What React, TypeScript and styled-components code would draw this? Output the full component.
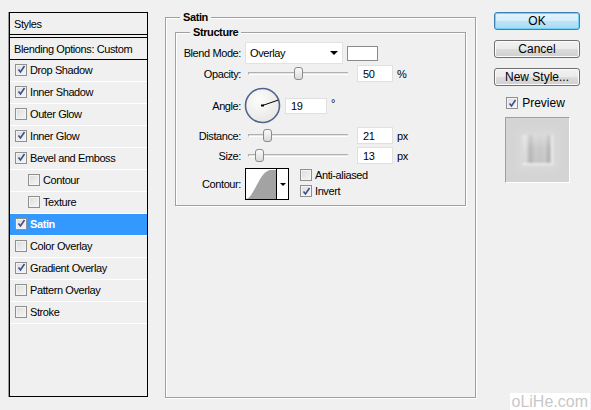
import React from 'react'
import styled, { createGlobalStyle } from 'styled-components'

const GlobalStyle = createGlobalStyle`
  html, body {
    margin: 0;
    padding: 0;
    background: #f0f0f0;
  }
  body {
    font-family: "Liberation Sans", Arial, sans-serif;
    font-size: 11px;
    letter-spacing: -0.4px;
    color: #000;
  }
`

const Window = styled.div`
  position: relative;
  width: 591px;
  height: 410px;
  overflow: hidden;
  display: flex;
  align-items: flex-start;
  padding: 12px 0 0 9px;
  box-sizing: border-box;
`

const StylesPanel = styled.div`
  width: 139px;
  height: 385px;
  box-sizing: border-box;
  border: 1px solid #000;
  box-shadow: -1px 0 0 #9a9a9a;
  display: flex;
  flex-direction: column;
`

const PanelHeader = styled.div`
  height: 21px;
  display: flex;
  align-items: center;
  padding-left: 4px;
  border-bottom: 1px solid #000;
`

const BlendingRow = styled.div`
  height: 21px;
  margin-top: 2px;
  display: flex;
  align-items: center;
  padding-left: 4px;
  border-top: 1px solid #000;
  border-bottom: 1px solid #000;
`

const StyleRow = styled.div<{ $indent?: boolean; $selected?: boolean }>`
  height: 22px;
  box-sizing: border-box;
  display: flex;
  align-items: center;
  gap: 3px;
  padding: 0 0 2px ${({ $indent }) => ($indent ? '18px' : '5px')};
  border-bottom: 1px solid #fff;
  background: ${({ $selected }) => ($selected ? '#3399ff' : 'transparent')};
  color: ${({ $selected }) => ($selected ? '#fff' : '#000')};
  font-weight: ${({ $selected }) => ($selected ? 'bold' : 'normal')};
`

const Box = styled.span`
  width: 12px;
  height: 12px;
  box-sizing: border-box;
  border: 1px solid #8e8f8f;
  background: linear-gradient(135deg, #dcdcdc, #f6f6f6);
  box-shadow: inset 0 0 0 1px #f4f4f4;
  display: inline-flex;
  align-items: center;
  justify-content: center;
  flex: none;
`

const Check = ({ on }: { on?: boolean }) => (
  <Box>
    {on && (
      <svg width="9" height="9" viewBox="0 0 9 9">
        <path d="M1.5 4.5 L3.5 7 L7.5 1" fill="none" stroke="#3d4f8a" strokeWidth="1.6" />
      </svg>
    )}
  </Box>
)

const Group = styled.div<{ $width: number; $height: number; $top: number; $left: number }>`
  position: relative;
  width: ${({ $width }) => $width}px;
  height: ${({ $height }) => $height}px;
  margin: ${({ $top, $left }) => `${$top}px 0 0 ${$left}px`};
  box-sizing: border-box;
  border: 1px solid #a0a0a0;
  box-shadow: 1px 1px 0 #fff, inset 1px 1px 0 #fff;
  flex: none;
`

const Legend = styled.span`
  position: absolute;
  top: -7px;
  left: 14px;
  padding: 0 3px;
  background: #f0f0f0;
  font-weight: bold;
  line-height: 13px;
`

const StructureBody = styled.div`
  display: flex;
  flex-direction: column;
  padding-top: 9px;
`

const Row = styled.div<{ $gap: number }>`
  display: flex;
  align-items: center;
  margin-top: ${({ $gap }) => $gap}px;
`

const Label = styled.span`
  width: 65px;
  text-align: right;
  flex: none;
`

const Select = styled.div`
  width: 98px;
  height: 22px;
  margin-left: 4px;
  box-sizing: border-box;
  background: #fff;
  border: 1px solid #e2e2e2;
  display: flex;
  align-items: center;
  justify-content: space-between;
  padding: 0 4px 0 4px;
`

const Arrow = styled.span`
  width: 0;
  height: 0;
  border-left: 4px solid transparent;
  border-right: 4px solid transparent;
  border-top: 4px solid #000;
`

const Swatch = styled.div`
  width: 31px;
  height: 15px;
  margin-left: 4px;
  box-sizing: border-box;
  background: #fff;
  border: 1px solid #8a8a8a;
`

const Track = styled.div<{ $left: number }>`
  position: relative;
  width: 100px;
  height: 3px;
  margin-left: ${({ $left }) => $left}px;
  box-sizing: border-box;
  background: #e4e4e4;
  border-top: 1px solid #b0b0b0;
  border-left: 1px solid #b0b0b0;
  border-bottom: 1px solid #fff;
`

const Thumb = styled.span`
  position: absolute;
  top: -6px;
  width: 9px;
  height: 13px;
  margin-left: -5px;
  box-sizing: border-box;
  border: 1px solid #8a8a8a;
  border-radius: 3px;
  background: linear-gradient(#fbfbfb, #dadada);
`

const Input = styled.div<{ $width: number; $left: number; $height?: number }>`
  width: ${({ $width }) => $width}px;
  height: ${({ $height = 17 }) => $height}px;
  margin-left: ${({ $left }) => $left}px;
  box-sizing: border-box;
  background: #fff;
  border: 1px solid #e0e0e0;
  display: flex;
  align-items: center;
  padding-left: 5px;
`

const Unit = styled.span<{ $raise?: boolean }>`
  margin-left: 4px;
  align-self: ${({ $raise }) => ($raise ? 'flex-start' : 'center')};
  margin-top: ${({ $raise }) => ($raise ? '10px' : '0')};
`

const Dial = styled.svg`
  margin-left: 3px;
  flex: none;
`

const ContourBox = styled.div`
  width: 44px;
  height: 32px;
  margin-left: 4px;
  box-sizing: border-box;
  border: 1px solid #000;
  display: flex;
  background: #fff;
`

const ContourDrop = styled.div`
  flex: 1;
  border-left: 1px solid #000;
  display: flex;
  align-items: center;
  justify-content: center;
  background: #fff;
`

const SmallArrow = styled.span`
  width: 0;
  height: 0;
  border-left: 3px solid transparent;
  border-right: 3px solid transparent;
  border-top: 3px solid #000;
`

const Options = styled.div`
  display: flex;
  flex-direction: column;
  gap: 4px;
  margin-left: 11px;
  align-self: flex-start;
  margin-top: 1px;
`

const Option = styled.label`
  display: flex;
  align-items: center;
  gap: 3px;
`

const Side = styled.div`
  width: 86px;
  margin-left: 18px;
  display: flex;
  flex-direction: column;
  align-items: center;
  flex: none;
  letter-spacing: 0;
`

const Button = styled.div<{ $primary?: boolean }>`
  width: 86px;
  height: 18px;
  box-sizing: border-box;
  border-radius: 3px;
  border: 1px solid ${({ $primary }) => ($primary ? '#3c7fb1' : '#707070')};
  background: ${({ $primary }) =>
    $primary
      ? 'linear-gradient(#e5f4fc 0%, #d4edfb 50%, #bde3f8 50%, #a9d9f4 100%)'
      : 'linear-gradient(#f2f2f2 0%, #ebebeb 50%, #dddddd 50%, #cfcfcf 100%)'};
  box-shadow: inset 0 0 0 1px ${({ $primary }) => ($primary ? '#6fd3f7' : '#fcfcfc')};
  display: flex;
  align-items: center;
  justify-content: center;
  font-size: 12px;
  margin-bottom: 10px;
`

const PreviewToggle = styled.label`
  display: flex;
  align-items: center;
  gap: 4px;
  font-size: 12px;
  margin: 0 3px 7px 0;
`

const PreviewBox = styled.div`
  width: 65px;
  height: 66px;
  box-sizing: border-box;
  border-top: 1px solid #a0a0a0;
  border-left: 1px solid #a0a0a0;
  border-bottom: 1px solid #fff;
  border-right: 1px solid #fff;
  background: #d4d4d4;
  display: flex;
  align-items: center;
  justify-content: center;
`

const PreviewSwatch = styled.div`
  width: 31px;
  height: 30px;
  background:
    linear-gradient(180deg, rgba(255, 255, 255, 0.3) 0%, rgba(255, 255, 255, 0) 45%, rgba(0, 0, 0, 0.03) 100%),
    linear-gradient(90deg, #d8d8d8 0%, #e2e2e2 12%, #b6b6b6 26%, #cdcdcd 42%, #c8c8c8 62%, #d0d0d0 74%, #b2b2b2 86%, #dadada 100%);
  box-shadow: 0 0 7px 5px #dadada, inset -2px -2px 0 #ececec;
  filter: blur(0.8px);
`

const Watermark = styled.span`
  position: absolute;
  right: 1px;
  bottom: 0;
  padding: 0 2px;
  background: #fff;
  color: #c8c8c8;
  font-size: 16px;
  letter-spacing: 0;
  line-height: 17px;
`

const styles = [
  { name: 'Drop Shadow', on: true },
  { name: 'Inner Shadow', on: true },
  { name: 'Outer Glow', on: false },
  { name: 'Inner Glow', on: true },
  { name: 'Bevel and Emboss', on: true },
  { name: 'Contour', on: false, indent: true },
  { name: 'Texture', on: false, indent: true },
  { name: 'Satin', on: true, selected: true },
  { name: 'Color Overlay', on: false },
  { name: 'Gradient Overlay', on: true },
  { name: 'Pattern Overlay', on: false },
  { name: 'Stroke', on: false },
]

const Slider = ({ pct }: { pct: number }) => (
  <Track $left={7}>
    <Thumb style={{ left: `${pct}%` }} />
  </Track>
)

const angle = 19
const rad = (angle * Math.PI) / 180

const App = () => {
  return (
    <Window>
      <GlobalStyle />
      <StylesPanel>
        <PanelHeader>Styles</PanelHeader>
        <BlendingRow>Blending Options: Custom</BlendingRow>
        {styles.map((s) => (
          <StyleRow key={s.name} $indent={s.indent} $selected={s.selected}>
            <Check on={s.on} />
            {s.name}
          </StyleRow>
        ))}
      </StylesPanel>

      <Group $width={311} $height={381} $top={5} $left={17}>
        <Legend>Satin</Legend>
        <Group $width={291} $height={174} $top={14} $left={9}>
          <Legend>Structure</Legend>
          <StructureBody>
            <Row $gap={0}>
              <Label>Blend Mode:</Label>
              <Select>
                Overlay
                <Arrow />
              </Select>
              <Swatch />
            </Row>
            <Row $gap={1}>
              <Label>Opacity:</Label>
              <Slider pct={50} />
              <Input $width={36} $left={9}>50</Input>
              <Unit>%</Unit>
            </Row>
            <Row $gap={5}>
              <Label>Angle:</Label>
              <Dial width="37" height="37" viewBox="0 0 37 37">
                <defs>
                  <radialGradient id="dialFill" cx="0.4" cy="0.35" r="0.7">
                    <stop offset="0" stopColor="#fdfdfd" />
                    <stop offset="1" stopColor="#e6e6e2" />
                  </radialGradient>
                </defs>
                <circle cx="18.5" cy="18.5" r="17" fill="url(#dialFill)" stroke="#53628f" strokeWidth="1.6" />
                <line
                  x1="18.5"
                  y1="18.5"
                  x2={18.5 + 16.5 * Math.cos(rad)}
                  y2={18.5 - 16.5 * Math.sin(rad)}
                  stroke="#000"
                  strokeWidth="1"
                />
                <rect x="17" y="17.5" width="3" height="2" fill="#000" />
              </Dial>
              <Input $width={42} $left={4} $height={16}>19</Input>
              <Unit $raise>°</Unit>
            </Row>
            <Row $gap={3}>
              <Label>Distance:</Label>
              <Slider pct={19} />
              <Input $width={36} $left={9}>21</Input>
              <Unit>px</Unit>
            </Row>
            <Row $gap={3}>
              <Label>Size:</Label>
              <Slider pct={11} />
              <Input $width={36} $left={9}>13</Input>
              <Unit>px</Unit>
            </Row>
            <Row $gap={4}>
              <Label>Contour:</Label>
              <ContourBox>
                <svg width="30" height="30" viewBox="0 0 30 30">
                  <path d="M0 30 C8 29 13 3 24 1 L30 1 L30 30 Z" fill="#a3a3a3" />
                </svg>
                <ContourDrop>
                  <SmallArrow />
                </ContourDrop>
              </ContourBox>
              <Options>
                <Option>
                  <Check />
                  Anti-aliased
                </Option>
                <Option>
                  <Check on />
                  Invert
                </Option>
              </Options>
            </Row>
          </StructureBody>
        </Group>
      </Group>

      <Side>
        <Button $primary>OK</Button>
        <Button>Cancel</Button>
        <Button>New Style...</Button>
        <PreviewToggle>
          <Check on />
          Preview
        </PreviewToggle>
        <PreviewBox>
          <PreviewSwatch />
        </PreviewBox>
      </Side>

      <Watermark>oLiHe.com</Watermark>
    </Window>
  )
}

export default App
